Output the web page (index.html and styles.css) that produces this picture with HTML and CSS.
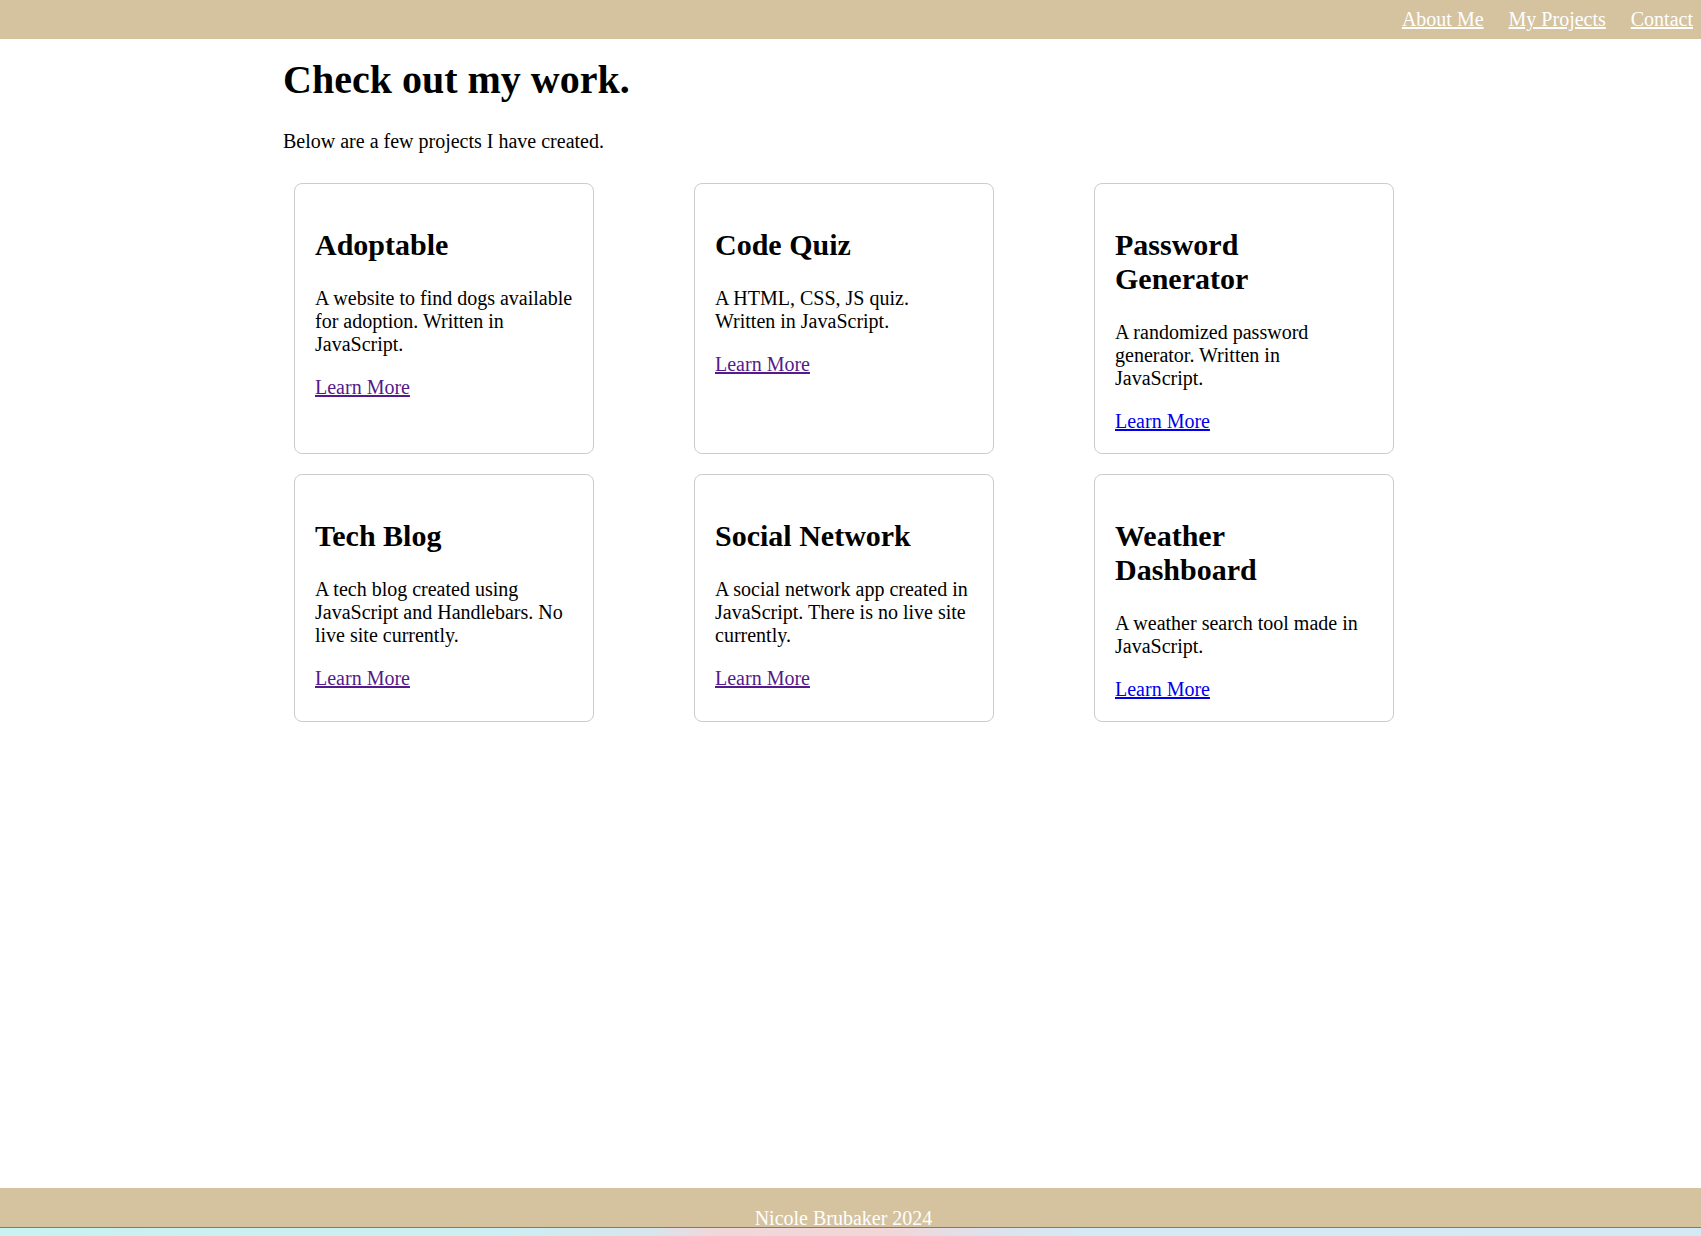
FILE: index.html
```html
<!DOCTYPE html>
<html lang="en">
<head>
<meta charset="UTF-8">
<title>My Projects</title>
<link rel="stylesheet" href="styles.css">
</head>
<body>
<div class="page">
  <header class="site-header">
    <nav class="nav">
      <a href="#about">About Me</a>
      <a href="#projects">My Projects</a>
      <a href="#contact">Contact</a>
    </nav>
  </header>
  <main class="main">
    <h1 class="title">Check out my work.</h1>
    <p class="intro">Below are a few projects I have created.</p>
    <section class="projects">
      <article class="card">
        <h2>Adoptable</h2>
        <p>A website to find dogs available for adoption. Written in JavaScript.</p>
        <p class="more"><a class="visited" href="#a">Learn More</a></p>
      </article>
      <article class="card">
        <h2>Code Quiz</h2>
        <p>A HTML, CSS, JS quiz. Written in JavaScript.</p>
        <p class="more"><a class="visited" href="#b">Learn More</a></p>
      </article>
      <article class="card">
        <h2>Password Generator</h2>
        <p>A randomized password generator. Written in JavaScript.</p>
        <p class="more"><a class="fresh" href="#c">Learn More</a></p>
      </article>
      <article class="card">
        <h2>Tech Blog</h2>
        <p>A tech blog created using JavaScript and Handlebars. No live site currently.</p>
        <p class="more"><a class="visited" href="#d">Learn More</a></p>
      </article>
      <article class="card">
        <h2>Social Network</h2>
        <p>A social network app created in JavaScript. There is no live site currently.</p>
        <p class="more"><a class="visited" href="#e">Learn More</a></p>
      </article>
      <article class="card">
        <h2>Weather Dashboard</h2>
        <p>A weather search tool made in JavaScript.</p>
        <p class="more"><a class="fresh" href="#f">Learn More</a></p>
      </article>
    </section>
  </main>
  <footer class="site-footer">
    <p>Nicole Brubaker 2024</p>
  </footer>
  <div class="window-edge"></div>
</div>
</body>
</html>
```

FILE: styles.css
```css
html, body {
  margin: 0;
  padding: 0;
  background: #ffffff;
}

body {
  font-family: "Liberation Serif", "Times New Roman", serif;
  font-size: 20px;
  color: #000000;
}

.page {
  display: flex;
  flex-direction: column;
  height: 1236px;
  overflow: hidden;
}

.site-header {
  background: #d5c3a0;
  height: 39px;
  box-sizing: border-box;
  padding: 8px 8px;
  flex: none;
}

.nav {
  display: flex;
  justify-content: flex-end;
  gap: 25px;
}

.nav a {
  color: #ffffff;
  text-decoration: underline;
}

.main {
  flex: 1;
  padding-left: 283px;
  padding-top: 17px;
}

.title {
  font-size: 40px;
  font-weight: bold;
  margin: 0 0 27px 0;
}

.intro {
  margin: 0 0 30px 0;
}

.projects {
  display: grid;
  grid-template-columns: repeat(3, 300px);
  column-gap: 100px;
  row-gap: 20px;
  padding-left: 11px;
}

.card {
  border: 1px solid #cccccc;
  border-radius: 8px;
  padding: 20px;
  box-sizing: border-box;
}

.card h2 {
  font-size: 30px;
  font-weight: bold;
  margin: 24px 0 25px 0;
}

.card p {
  margin: 0 0 20px 0;
}

.card p.more {
  margin-bottom: 0;
}

.card a.visited {
  color: #551a8b;
}

.card a.fresh {
  color: #0000ee;
}

.site-footer {
  flex: none;
  height: 39px;
  background: #d5c3a0;
  box-sizing: border-box;
  padding: 22px 14px 0 0;
  overflow: hidden;
  text-align: center;
  color: #ffffff;
}

.site-footer p {
  margin: 0;
  line-height: 16px;
}

.window-edge {
  flex: none;
  height: 8px;
  border-top: 1px solid #7a7a78;
  background: linear-gradient(90deg, #c9f2f0 0%, #cdeef2 30%, #d6e6ee 38%, #f0d8da 42%, #f2d6d8 52%, #dde2ec 58%, #d4eaf4 64%, #d3eaf5 100%);
}
```
